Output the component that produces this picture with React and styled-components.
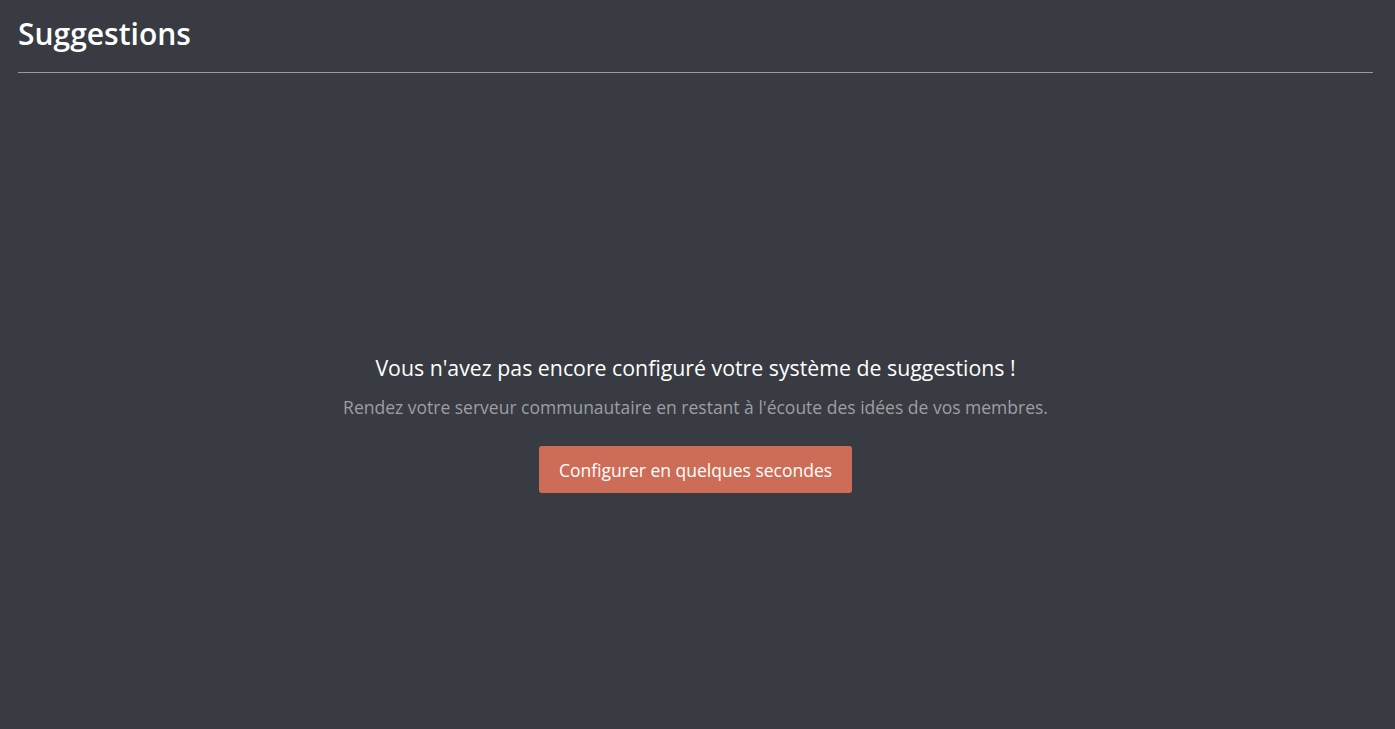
import React from 'react';
import styled, { createGlobalStyle } from 'styled-components';

const GlobalStyle = createGlobalStyle`
    html, body {
        margin:0;
        padding:0;
        background:#383b41;
    }
    body {
        font-family:"Open Sans", "Noto Sans", sans-serif;
        color:#ffffff;
    }
`
const Page = styled.div`
    min-height:729px;
    padding:0 22px 0 18px;
    display:flex;
    flex-direction:column;
    box-sizing:border-box;
`
const Header = styled.div`
    padding-top:15px;
    padding-bottom:19px;
    border-bottom:1px solid #9a9b9e;
`
const Title = styled.h1`
    margin:0;
    font-size:30px;
    font-weight:600;
    line-height:38px;
    color:#ffffff;
`
const Empty = styled.div`
    flex:1;
    display:flex;
    flex-direction:column;
    align-items:center;
    padding-top:280px;
`
const Heading = styled.h2`
    margin:0;
    font-size:21.3px;
    font-weight:400;
    line-height:30px;
    color:#ffffff;
`
const Text = styled.p`
    margin:12px 0 0;
    font-size:17.5px;
    line-height:24px;
    color:#9d9fa3;
`
const Button = styled.button`
    margin-top:27px;
    height:47px;
    padding:0 20px;
    border:none;
    border-radius:3px;
    background:#cd6d57;
    color:#ffffff;
    font-family:inherit;
    font-size:17.5px;
    cursor:pointer;
`

const App = () => {
    return (
        <Page>
            <GlobalStyle/>
            <Header>
                <Title>Suggestions</Title>
            </Header>
            <Empty>
                <Heading>Vous n'avez pas encore configuré votre système de suggestions !</Heading>
                <Text>Rendez votre serveur communautaire en restant à l'écoute des idées de vos membres.</Text>
                <Button>Configurer en quelques secondes</Button>
            </Empty>
        </Page>
    );
}

export default App;
